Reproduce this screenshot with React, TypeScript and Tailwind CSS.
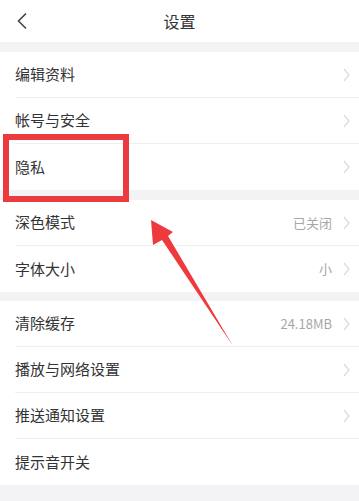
import React from "react";

type Row = { label: string; value?: string; chevron?: boolean };

const groups: Row[][] = [
  [
    { label: "编辑资料", chevron: true },
    { label: "帐号与安全", chevron: true },
    { label: "隐私", chevron: true },
  ],
  [
    { label: "深色模式", value: "已关闭", chevron: true },
    { label: "字体大小", value: "小", chevron: true },
  ],
  [
    { label: "清除缓存", value: "24.18MB", chevron: true },
    { label: "播放与网络设置", chevron: true },
    { label: "推送通知设置", chevron: true },
    { label: "提示音开关", chevron: false },
  ],
];

function Chevron() {
  return (
    <svg width="7" height="14" viewBox="0 0 7 14" className="ml-[11px]">
      <path d="M1 1 L6 7 L1 13" fill="none" stroke="#dcdcdc" strokeWidth="1.3" />
    </svg>
  );
}

function RowItem({ row, last }: { row: Row; last: boolean }) {
  return (
    <div className="h-[46px] bg-white pl-[15px]">
      <div
        className={
          "flex h-full items-center pr-[9px] " +
          (last ? "" : "border-b border-[#efefef]")
        }
      >
        <span className="flex-1 text-[15px] text-[#333333]">{row.label}</span>
        {row.value && (
          <span className="text-[13px] text-[#a6a6a6]">{row.value}</span>
        )}
        {row.chevron && <Chevron />}
      </div>
    </div>
  );
}

export default function App() {
  return (
    <div
      className="relative h-[501px] w-[359px] overflow-hidden bg-[#f3f3f5]"
      style={{ fontFamily: '"Noto Sans CJK SC", "Noto Sans", sans-serif' }}
    >
      <div className="relative flex h-[42px] items-center justify-center bg-white">
        <svg
          width="12"
          height="18"
          viewBox="0 0 12 18"
          className="absolute left-[16px] top-[12px]"
        >
          <path d="M10 1.5 L2.5 9 L10 16.5" fill="none" stroke="#444" strokeWidth="1.6" />
        </svg>
        <span className="text-[16px] text-[#333333]">设置</span>
      </div>

      {groups.map((g, gi) => (
        <div key={gi} className={gi === 2 ? "mt-[9px]" : "mt-[10px]"}>
          {g.map((r, ri) => (
            <RowItem key={ri} row={r} last={ri === g.length - 1} />
          ))}
        </div>
      ))}

      {/* annotation: red box */}
      <div className="pointer-events-none absolute left-[3px] top-[134px] h-[68px] w-[126px] border-[6px] border-[#ec3b3f]" />

      {/* annotation: arrow */}
      <svg
        className="pointer-events-none absolute left-0 top-0"
        width="359"
        height="501"
        viewBox="0 0 359 501"
      >
        <polygon
          points="151,220 173,232 168,236 233,346 162,240 153,245"
          fill="#ee3a3d"
        />
      </svg>
    </div>
  );
}
